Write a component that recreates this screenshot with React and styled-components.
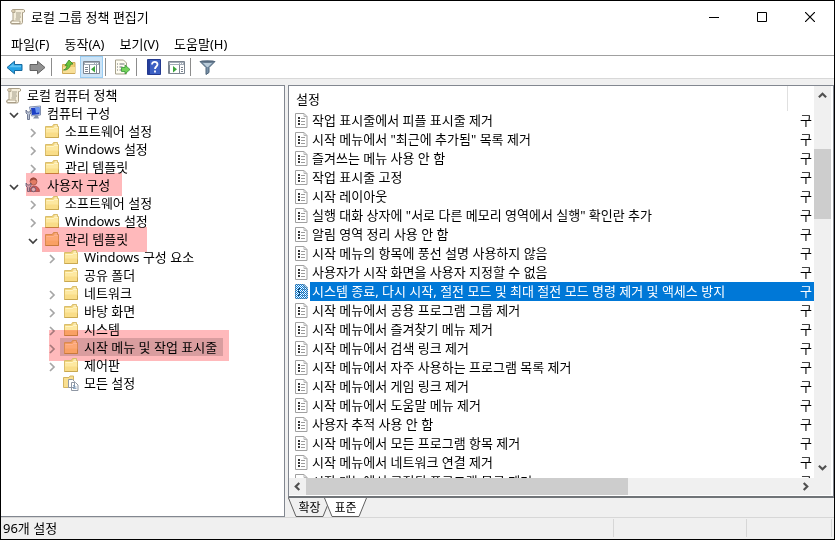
import React from "react";
import styled, { createGlobalStyle, css } from "styled-components";

const GlobalStyle = createGlobalStyle`
  *, *::before, *::after { box-sizing: border-box; }
  body { margin: 0; background: #f0f0f0; }
  body, button, table {
    font: 13px/18px "Noto Sans", "Noto Sans CJK KR", sans-serif;
    color: #000;
  }
  button { padding: 0; border: 0; background: none; }
  svg { display: block; flex: none; }
`;

const Window = styled.div`
  display: flex;
  flex-direction: column;
  height: 100vh;
  border: 1px solid #000;
  background: #f0f0f0;
  overflow: hidden;
`;

const TitleBar = styled.header`
  display: flex;
  align-items: center;
  gap: 5px;
  flex: none;
  height: 31px;
  padding-left: 8px;
  background: #fff;
`;

const Title = styled.h1`
  flex: 1;
  margin: 0;
  font-size: 13px;
  line-height: 18px;
  font-weight: 400;
`;

const CaptionButton = styled.button`
  display: grid;
  place-items: center;
  width: 42px;
  height: 31px;
`;

const CaptionButtons = styled.div`
  display: flex;
  gap: 6px;
  padding-right: 3px;
`;

const MenuBar = styled.nav`
  display: flex;
  align-items: center;
  gap: 15px;
  flex: none;
  height: 24px;
  padding-left: 10px;
  border-bottom: 1px solid #a0a0a0;
  background: #fff;
`;

const MenuButton = styled.button`
  white-space: nowrap;
`;

const ToolBar = styled.div`
  display: flex;
  flex: none;
  height: 23px;
  padding-left: 2px;
  border-bottom: 1px solid #d8d8d8;
  background: #fff;
`;

const ToolButton = styled.button`
  display: grid;
  place-items: center;
  width: 23px;
  ${(p) => p.$active && css`
    background: #cce4f7;
    box-shadow: inset 0 0 0 1px #99cdf3;
  `}
`;

const ToolSeparator = styled.span`
  width: 8px;
  padding-left: 2px;
  &::before {
    content: "";
    display: block;
    width: 1px;
    height: 18px;
    margin-top: 2px;
    background: #8c8c8c;
  }
`;

const Workspace = styled.main`
  display: grid;
  grid-template-columns: 284px minmax(0, 1fr);
  gap: 3px;
  flex: 1;
  min-height: 0;
  padding-top: 6px;
`;

const TreePane = styled.section`
  min-height: 0;
  overflow: hidden;
  border: solid #828790;
  border-width: 1px 1px 1px 0;
  background: #fff;
`;

const Tree = styled.ul`
  margin: 0;
  padding: 0;
  list-style: none;
`;

const TreeRow = styled.li`
  position: relative;
  display: flex;
  align-items: center;
  height: 18px;
  padding-left: ${(p) => (p.$level ? p.$level * 19 - 14 : 4)}px;
`;

const Expander = styled.span`
  display: grid;
  place-items: center;
  width: 16px;
  height: 18px;
  margin-right: 3px;
  padding-top: 3px;
`;

const TreeLabel = styled.span`
  display: flex;
  align-items: center;
  gap: 5px;
  height: 18px;
  white-space: nowrap;
  ${(p) => p.$selected && css`
    margin-left: -3px;
    padding: 0 6px 0 3px;
    background: #d9d9d9;
  `}
`;

const Marker = styled.span`
  position: absolute;
  left: ${(p) => p.$left}px;
  top: ${(p) => p.$top}px;
  width: ${(p) => p.$width}px;
  height: ${(p) => p.$height}px;
  background: #ffb9bb;
  mix-blend-mode: multiply;
  pointer-events: none;
`;

const ResultPane = styled.section`
  display: flex;
  flex-direction: column;
  min-width: 0;
  min-height: 0;
`;

const ListFrame = styled.div`
  display: grid;
  grid-template-columns: minmax(0, 1fr) 17px;
  grid-template-rows: minmax(0, 1fr) 17px;
  flex: 1;
  min-height: 0;
  padding: 0 2px 1px 0;
  border: 1px solid #828790;
  border-bottom: 2px solid #707478;
  background: #fff;
`;

const ListView = styled.div`
  min-width: 0;
  overflow: hidden;
`;

const SettingsTable = styled.table`
  width: 100%;
  table-layout: fixed;
  border-collapse: collapse;
  td, th { padding: 0; overflow: hidden; white-space: nowrap; }
`;

const HeaderCell = styled.th`
  height: 25px;
  vertical-align: top;
  text-align: left;
  font-weight: 400;
  width: ${(p) => (p.$state ? "26px" : "auto")};
`;

const HeaderLabel = styled.span`
  display: flex;
  align-items: center;
  height: 25px;
  padding-left: 7px;
  ${(p) => p.$divider && css`border-right: 1px solid #e0e0e0;`}
`;

const SettingCell = styled.div`
  display: flex;
  align-items: center;
  gap: 1px;
  height: 19px;
  padding-left: 5px;
`;

const SettingName = styled.span`
  flex: 1;
  height: 19px;
  padding-left: 2px;
  line-height: 18px;
  ${(p) => p.$selected && css`background: #0078d7; color: #fff;`}
`;

const StateText = styled.div`
  height: 19px;
  padding-left: 12px;
  line-height: 18px;
  ${(p) => p.$selected && css`background: #0078d7; color: #fff;`}
`;

const ScrollBar = styled.div`
  display: flex;
  background: #f0f0f0;
`;

const VerticalBar = styled(ScrollBar)`
  flex-direction: column;
  padding: 1px 0 2px;
`;

const ArrowButton = styled.button`
  display: grid;
  place-items: center;
  flex: none;
  width: 17px;
  height: 17px;
`;

const VerticalTrack = styled.div`
  display: grid;
  grid-template-rows: 45fr 70fr 239fr;
  flex: 1;
  &::before { content: ""; grid-row: 2; background: #cdcdcd; }
`;

const HorizontalTrack = styled.div`
  display: grid;
  grid-template-columns: 320fr 168fr;
  flex: 1;
  &::before { content: ""; background: #cdcdcd; }
`;

const Corner = styled.div`
  background: #f0f0f0;
`;

const Tabs = styled.div`
  display: flex;
  flex: none;
  height: 19px;
`;

const Tab = styled.button`
  position: relative;
  width: 43px;
  height: 19px;
  margin-right: -7px;
  z-index: ${(p) => (p.$selected ? 1 : 0)};
  font-size: 12px;
  svg { position: absolute; inset: 0; }
  span { position: relative; }
`;

const StatusBar = styled.footer`
  display: grid;
  grid-template-columns: minmax(0, 1fr) 133px 85px;
  flex: none;
  height: 22px;
  padding: 1px 2px 2px 0;
  border-top: 1px solid #d7d7d7;
`;

const StatusCell = styled.div`
  padding-left: 2px;
  border-right: 1px solid #d7d7d7;
`;

/* ---------- icons ---------- */

const ScrollIcon = () => (
  <svg width="17" height="17" viewBox="0 0 17 17">
    <path d="M4 1.5h10.5c1.5 0 1.5 3 0 3h-1v10c0 1-1 1.5-2 1.5H3c-2 0-2-3 0-3h1z" fill="#f5eedb" stroke="#aa9f88" />
    <path d="M4 1.5c-2 0-2 3 0 3h2v-2C6 1.5 5 1.5 4 1.5z" fill="#d8cbb0" stroke="#a59a82" strokeWidth=".7" />
    <path d="M3 13h8v2.5H3c-1.500 0-1.500-2.500 0-2.500z" fill="#fffbed" stroke="#998d75" strokeWidth=".8" />
    <path d="M7 5h5M7 7h4.500M7 9h5M6.500 11h4.500" stroke="#9a927f" strokeWidth=".9" />
  </svg>
);

const FolderIcon = () => (
  <svg width="16" height="16" viewBox="0 0 16 16">
    <path d="M1.500 3.500h6.800l1.200-2h4v2h1v11h-13z" fill="#f3d67c" stroke="#d9bd6c" />
    <path d="M10 3.500l1-1h2v1z" fill="#fff9df" />
    <path d="M2 5h7l1-1h4v10H2z" fill="#fde8a0" />
    <path d="M2 9.500h12V14H2z" fill="#f7da82" opacity=".8" />
    <path d="M2.500 5.500h7l1-1h3.500" fill="none" stroke="#fff6cf" strokeWidth=".8" />
    <path d="M1.500 14.500h13v-4" fill="none" stroke="#c9a850" />
  </svg>
);

const ComputerIcon = () => (
  <svg width="17" height="16" viewBox="0 0 17 16">
    <path d="M4.500 2l11-1v9l-9 1z" fill="#e3e9f4" stroke="#8290ae" />
    <path d="M6 3l8.500-.8v7L7 10z" fill="#1a3ec5" />
    <path d="M10 2.500l4.500-.3v5L11 8z" fill="#6d98ef" />
    <path d="M10 11h3l1 2.500H8z" fill="#8591a8" />
    <path d="M1 5v3l1.500 1.500v5h2v-5L6 8V5L4.500 7h-2z" fill="#b9c2d4" stroke="#55617d" strokeWidth=".8" />
  </svg>
);

const UserIcon = () => (
  <svg width="17" height="16" viewBox="0 0 17 16">
    <circle cx="8.500" cy="4.500" r="3.500" fill="#e2ab88" stroke="#9d6a54" strokeWidth=".7" />
    <path d="M5 4c0-5 7-4.500 7 0L9 2.500z" fill="#9b6350" />
    <path d="M5 14.500c0-4 1.500-5.500 4-5.500s5.500 1.500 5.500 5.500z" fill="#cf7a72" stroke="#9a5a60" strokeWidth=".7" />
    <path d="M1 6v3l1.500 1.500v4h2v-4L6 9V6L4.500 8h-2z" fill="#d2d9e6" stroke="#65718c" strokeWidth=".8" />
    <circle cx="8.500" cy="12.500" r="2.200" fill="#e6eaf2" stroke="#74809a" />
  </svg>
);

const AllSettingsIcon = () => (
  <svg width="16" height="16" viewBox="0 0 16 16">
    <path d="M.5 2.500H6l1-1.500h3.500V12.500H.5z" fill="#f9df90" stroke="#d3b562" />
    <path d="M5.500 4.500h4l2 2v6h-6zM8.500 7.500h4l2.500 2.500v5.500H8.500z" fill="#fff" stroke="#8f97a4" />
    <path d="M10 10.500h2M10 12h3.500M10 13.500h3.500" stroke="#7595b8" strokeWidth=".8" />
  </svg>
);

const ICONS = { scroll: ScrollIcon, folder: FolderIcon, computer: ComputerIcon, user: UserIcon, all: AllSettingsIcon };

const Chevron = ({ dir, size = 10, color = "#a6a6a6", width = 1.700 }) => {
  const d = {
    right: "M3 1l4 4-4 4",
    left: "M7 1L3 5l4 4",
    down: "M1 3l4 4 4-4",
    up: "M1 7l4-4 4 4",
  }[dir];
  return (
    <svg width={size} height={size} viewBox="0 0 10 10">
      <path d={d} fill="none" stroke={color} strokeWidth={width} />
    </svg>
  );
};

const ScrollChevron = ({ dir }) => <Chevron dir={dir} size={9} color="#505050" width={2.400} />;

const SettingIcon = ({ selected }) => (
  <svg width="15" height="15" viewBox="0 0 15 15">
    {selected && (
      <defs>
        <pattern id="dither" width="2" height="2" patternUnits="userSpaceOnUse">
          <path d="M0 0h1v1H0zM1 1h1v1H1z" fill="#0078d7" />
        </pattern>
      </defs>
    )}
    <path d="M1.500 .5h8.500l3 3v11H1.500z" fill="#fff" stroke="#a0a0a0" />
    <path d="M10 .5v3h3" fill="none" stroke="#b4b4b4" />
    <path d="M4 4h2v2H4zM4 7h2v2H4zM4 10h2v2H4z" fill="#333" />
    <path d="M7 5.500h4M7 8.500h4M7 11.500h4" stroke="#9b9b9b" />
    {selected && <path d="M1 0h9l4 4v11H1z" fill="url(#dither)" />}
  </svg>
);

const ArrowIcon = ({ forward }) => (
  <svg width="17" height="15" viewBox="0 0 17 15">
    {forward ? (
      <path d="M1 4.500h7.500V1.200L16 7.500l-7.500 6.300v-3.300H1z" fill="#929292" stroke="#626262" />
    ) : (
      <>
        <path d="M16 4.500H8.500V1.200L1 7.500l7.500 6.300v-3.300H16z" fill="#24a3e6" stroke="#17699e" />
        <path d="M15 5.500H7.500v-2L3 7.300h12z" fill="#7dd0f6" opacity=".7" />
      </>
    )}
  </svg>
);

const UpFolderIcon = () => (
  <svg width="16" height="16" viewBox="0 0 16 16">
    <path d="M1.500 5.500h7l1-2h4.500v11H1.500z" fill="#efcd71" stroke="#cfab58" />
    <path d="M2 8h12v6H2z" fill="#f8df97" />
    <path d="M2.500 11C4.500 10.500 6 8.500 6 6L4 6.500 8 1l4 4-2.500.300C9 9 6 11.500 2.500 11z" fill="#66c43a" stroke="#37852b" strokeWidth=".8" />
  </svg>
);

const PaneIcon = ({ play }) => (
  <svg width="17" height="16" viewBox="0 0 17 16">
    <path d="M.5 2.500h16v12H.5z" fill="#fff" stroke="#7c8590" />
    <path d="M1 3h15v3H1z" fill="#a4adb8" />
    <path d="M2 4.500h9M12 4.500h1M14 4.500h1" stroke="#fff" />
    <path d={play ? "M11.500 6v8" : "M6.500 6v8"} stroke="#7c8590" />
    <path d={play ? "M13 8.500h2M13 10.500h2M13 12.500h2M1.500 6v8" : "M2 8.500h3M2 10.500h3M2 12.500h3M13.500 6v8"} stroke="#7c8590" />
    <path d={play ? "M5 7l4 3.200-4 3.200z" : "M12 7L8 10.200l4 3.200z"} fill="#3da53c" />
  </svg>
);

const ExportIcon = () => (
  <svg width="17" height="16" viewBox="0 0 17 16">
    <path d="M1.500 1h8l3 3v11h-11z" fill="#fffdf1" stroke="#a6a18c" />
    <path d="M3 5h1M3 8h1M3 11h1M5.500 5h5M5.500 8h3M5.500 11h3" stroke="#6b7078" />
    <path d="M7.500 8.500H11V6l5 4.500-5 4.500v-2.500H7.500z" fill="#73d35a" stroke="#37963a" strokeWidth=".8" />
  </svg>
);

const HelpIcon = () => (
  <svg width="14" height="16" viewBox="0 0 14 16">
    <path d="M.5.5h13v15H.5z" fill="#3c60c3" stroke="#23398f" />
    <path d="M1 1h2v14H1z" fill="#253e9c" />
    <path d="M5 5.500c0-3.500 5.500-3.300 5.500 0 0 2-2.500 2-2.500 4.500M8 11.500v2" fill="none" stroke="#fff" strokeWidth="1.800" />
  </svg>
);

const FilterIcon = () => (
  <svg width="17" height="16" viewBox="0 0 17 16">
    <path d="M1 2.500h15l-6 6v5l-3 2v-7z" fill="#7790a8" stroke="#4e6478" />
    <path d="M3.500 3.500h10l-4.500 4.500H8z" fill="#b9cbd9" />
    <ellipse cx="8.500" cy="2.500" rx="7.500" ry="1.300" fill="#55697e" />
  </svg>
);

/* ---------- data ---------- */

const MENUS = ["파일(F)", "동작(A)", "보기(V)", "도움말(H)"];

const TREE = [
  { level: 0, icon: "scroll", text: "로컬 컴퓨터 정책" },
  { level: 1, icon: "computer", text: "컴퓨터 구성", open: true },
  { level: 2, icon: "folder", text: "소프트웨어 설정", open: false },
  { level: 2, icon: "folder", text: "Windows 설정", open: false },
  { level: 2, icon: "folder", text: "관리 템플릿", open: false },
  { level: 1, icon: "user", text: "사용자 구성", open: true, marker: { $left: 25, $top: -3, $width: 96, $height: 23 } },
  { level: 2, icon: "folder", text: "소프트웨어 설정", open: false },
  { level: 2, icon: "folder", text: "Windows 설정", open: false },
  { level: 2, icon: "folder", text: "관리 템플릿", open: true, marker: { $left: 41, $top: -3, $width: 105, $height: 25 } },
  { level: 3, icon: "folder", text: "Windows 구성 요소", open: false },
  { level: 3, icon: "folder", text: "공유 폴더" },
  { level: 3, icon: "folder", text: "네트워크", open: false },
  { level: 3, icon: "folder", text: "바탕 화면", open: false },
  { level: 3, icon: "folder", text: "시스템", open: false },
  { level: 3, icon: "folder", text: "시작 메뉴 및 작업 표시줄", open: false, selected: true, marker: { $left: 48, $top: -8, $width: 180, $height: 31 } },
  { level: 3, icon: "folder", text: "제어판", open: false },
  { level: 3, icon: "all", text: "모든 설정" },
];

const SETTINGS = [
  "작업 표시줄에서 피플 표시줄 제거",
  "시작 메뉴에서 \"최근에 추가됨\" 목록 제거",
  "즐겨쓰는 메뉴 사용 안 함",
  "작업 표시줄 고정",
  "시작 레이아웃",
  "실행 대화 상자에 \"서로 다른 메모리 영역에서 실행\" 확인란 추가",
  "알림 영역 정리 사용 안 함",
  "시작 메뉴의 항목에 풍선 설명 사용하지 않음",
  "사용자가 시작 화면을 사용자 지정할 수 없음",
  "시스템 종료, 다시 시작, 절전 모드 및 최대 절전 모드 명령 제거 및 액세스 방지",
  "시작 메뉴에서 공용 프로그램 그룹 제거",
  "시작 메뉴에서 즐겨찾기 메뉴 제거",
  "시작 메뉴에서 검색 링크 제거",
  "시작 메뉴에서 자주 사용하는 프로그램 목록 제거",
  "시작 메뉴에서 게임 링크 제거",
  "시작 메뉴에서 도움말 메뉴 제거",
  "사용자 추적 사용 안 함",
  "시작 메뉴에서 모든 프로그램 항목 제거",
  "시작 메뉴에서 네트워크 연결 제거",
  "시작 메뉴에서 고정된 프로그램 목록 제거",
];
const SELECTED_SETTING = 9;

const TreeItem = ({ item }) => {
  const Icon = ICONS[item.icon];
  const expandable = item.open !== undefined;
  return (
    <TreeRow
      $level={item.level}
      role="treeitem"
      aria-level={item.level + 1}
      aria-expanded={expandable ? item.open : undefined}
      aria-selected={!!item.selected}
    >
      {item.level > 0 && (
        <Expander>
          {expandable && <Chevron dir={item.open ? "down" : "right"} color={item.open ? "#404040" : "#a6a6a6"} />}
        </Expander>
      )}
      <TreeLabel $selected={item.selected}>
        <Icon />
        {item.text}
      </TreeLabel>
      {item.marker && <Marker {...item.marker} />}
    </TreeRow>
  );
};

const TabShape = ({ selected }) => (
  <svg width="43" height="19" viewBox="0 0 43 19">
    <path d="M0 0l8 18.500h27L43 0z" fill={selected ? "#fff" : "#f0f0f0"} />
    <path d="M.5 0L8 18.500h27L42.500 0" fill="none" stroke="#606060" />
  </svg>
);

export default function App() {
  return (
    <>
      <GlobalStyle />
      <Window>
        <TitleBar>
          <ScrollIcon />
          <Title>로컬 그룹 정책 편집기</Title>
          <CaptionButtons>
            <CaptionButton aria-label="최소화">
              <svg width="10" height="10" viewBox="0 0 10 10"><path d="M0 5.500h10" stroke="#000" /></svg>
            </CaptionButton>
            <CaptionButton aria-label="최대화">
              <svg width="10" height="10" viewBox="0 0 10 10"><path d="M.5.5h9v9h-9z" fill="none" stroke="#000" /></svg>
            </CaptionButton>
            <CaptionButton aria-label="닫기">
              <svg width="10" height="10" viewBox="0 0 10 10"><path d="M0 0l10 10M10 0L0 10" stroke="#000" strokeWidth="1.200" /></svg>
            </CaptionButton>
          </CaptionButtons>
        </TitleBar>
        <MenuBar>
          {MENUS.map((m) => <MenuButton key={m}>{m}</MenuButton>)}
        </MenuBar>
        <ToolBar role="toolbar">
          <ToolButton aria-label="뒤로"><ArrowIcon /></ToolButton>
          <ToolButton aria-label="앞으로"><ArrowIcon forward /></ToolButton>
          <ToolSeparator />
          <ToolButton aria-label="위로"><UpFolderIcon /></ToolButton>
          <ToolButton aria-label="콘솔 트리 표시" aria-pressed="true" $active><PaneIcon /></ToolButton>
          <ToolSeparator />
          <ToolButton aria-label="목록 내보내기"><ExportIcon /></ToolButton>
          <ToolSeparator />
          <ToolButton aria-label="도움말"><HelpIcon /></ToolButton>
          <ToolButton aria-label="작업 창 표시"><PaneIcon play /></ToolButton>
          <ToolSeparator />
          <ToolButton aria-label="필터"><FilterIcon /></ToolButton>
        </ToolBar>
        <Workspace>
          <TreePane>
            <Tree role="tree">
              {TREE.map((item, i) => <TreeItem key={i} item={item} />)}
            </Tree>
          </TreePane>
          <ResultPane>
            <ListFrame>
              <ListView>
                <SettingsTable>
                  <thead>
                    <tr>
                      <HeaderCell scope="col"><HeaderLabel $divider>설정</HeaderLabel></HeaderCell>
                      <HeaderCell scope="col" $state aria-label="상태" />
                    </tr>
                  </thead>
                  <tbody>
                    {SETTINGS.map((name, i) => {
                      const selected = i === SELECTED_SETTING;
                      return (
                        <tr key={name} aria-selected={selected}>
                          <td>
                            <SettingCell>
                              <SettingIcon selected={selected} />
                              <SettingName $selected={selected}>{name}</SettingName>
                            </SettingCell>
                          </td>
                          <td><StateText $selected={selected}>구</StateText></td>
                        </tr>
                      );
                    })}
                  </tbody>
                </SettingsTable>
              </ListView>
              <VerticalBar>
                <ArrowButton aria-label="위로 스크롤"><ScrollChevron dir="up" /></ArrowButton>
                <VerticalTrack />
                <ArrowButton aria-label="아래로 스크롤"><ScrollChevron dir="down" /></ArrowButton>
              </VerticalBar>
              <ScrollBar>
                <ArrowButton aria-label="왼쪽으로 스크롤"><ScrollChevron dir="left" /></ArrowButton>
                <HorizontalTrack />
                <ArrowButton aria-label="오른쪽으로 스크롤"><ScrollChevron dir="right" /></ArrowButton>
              </ScrollBar>
              <Corner />
            </ListFrame>
            <Tabs role="tablist">
              <Tab role="tab" aria-selected="false"><TabShape /><span>확장</span></Tab>
              <Tab role="tab" aria-selected="true" $selected><TabShape selected /><span>표준</span></Tab>
            </Tabs>
          </ResultPane>
        </Workspace>
        <StatusBar>
          <StatusCell>96개 설정</StatusCell>
          <StatusCell />
          <StatusCell />
        </StatusBar>
      </Window>
    </>
  );
}
